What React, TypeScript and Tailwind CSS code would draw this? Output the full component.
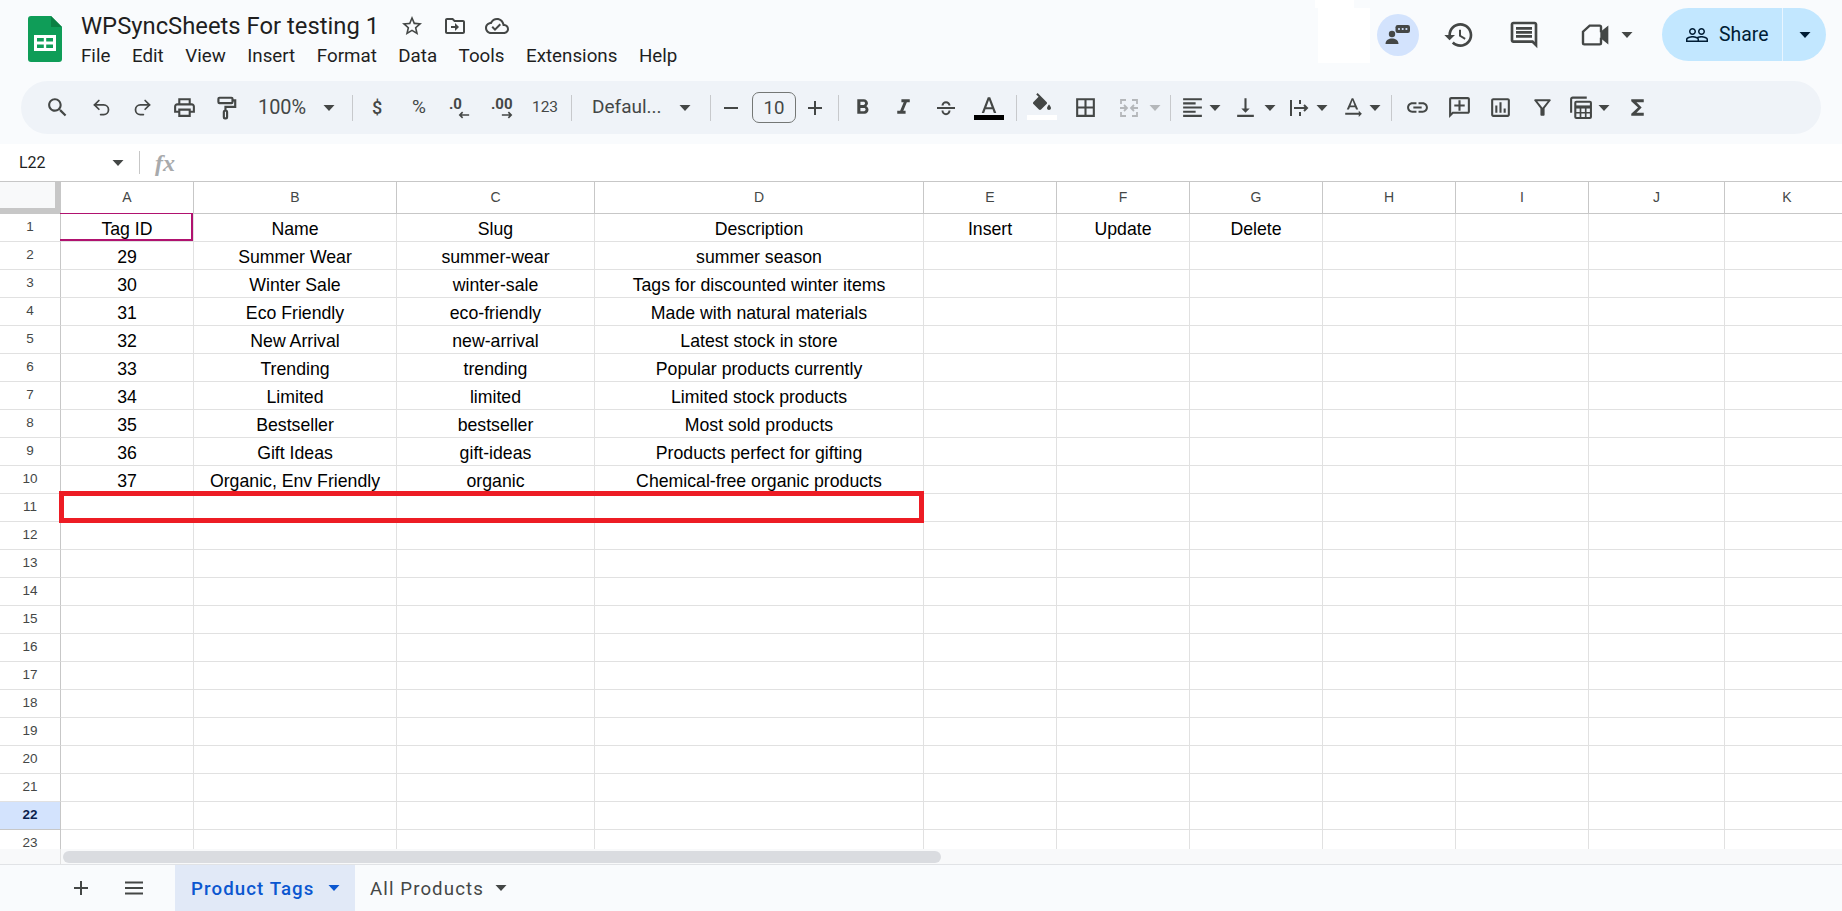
import React from "react";
import { Undo2, Redo2 } from "lucide-react";

const P: Record<string, string> = {
  search: "M15.5 14h-.79l-.28-.27C15.41 12.59 16 11.11 16 9.5 16 5.91 13.09 3 9.5 3S3 5.91 3 9.5 5.91 16 9.5 16c1.61 0 3.09-.59 4.23-1.57l.27.28v.79l5 4.99L20.49 19l-4.99-5zm-6 0C7.01 14 5 11.99 5 9.5S7.01 5 9.5 5 14 7.01 14 9.5 11.99 14 9.5 14z",
  print: "M19 8h-1V3H6v5H5c-1.66 0-3 1.34-3 3v6h4v4h12v-4h4v-6c0-1.66-1.34-3-3-3zM8 5h8v3H8V5zm8 12v2H8v-4h8v2zm2-2v-2H6v2H4v-4c0-.55.45-1 1-1h14c.55 0 1 .45 1 1v4h-2z",
  bold: "M15.6 10.79c.97-.67 1.65-1.77 1.65-2.79 0-2.26-1.75-4-4-4H7v14h7.04c2.09 0 3.71-1.7 3.71-3.79 0-1.52-.86-2.82-2.15-3.42zM10 6.5h3c.83 0 1.5.67 1.5 1.5s-.67 1.5-1.5 1.5h-3v-3zm3.5 9H10v-3h3.5c.83 0 1.5.67 1.5 1.5s-.67 1.5-1.5 1.5z",
  italic: "M10 4v3h2.21l-3.42 8H6v3h8v-3h-2.21l3.42-8H18V4z",
  borders: "M3 3v18h18V3H3zm8 16H5v-6h6v6zm0-8H5V5h6v6zm8 8h-6v-6h6v6zm0-8h-6V5h6v6z",
  align: "M15 15H3v2h12v-2zm0-8H3v2h12V7zM3 13h18v-2H3v2zm0 8h18v-2H3v2zM3 3v2h18V3H3z",
  valign: "M16 13h-3V3h-2v10H8l4 4 4-4zM4 19v2h16v-2H4z",
  rot: "M21 18l-3-3v2H5v2h13v2l3-3zM9.5 11.8h5l.9 2.2h2.1L12.75 3h-1.5L6.5 14h2.1l.9-2.2zM12 5l1.87 5h-3.74L12 5z",
  link: "M3.9 12c0-1.71 1.39-3.1 3.1-3.1h4V7H7c-2.76 0-5 2.24-5 5s2.24 5 5 5h4v-1.9H7c-1.71 0-3.1-1.39-3.1-3.1zM8 13h8v-2H8v2zm9-6h-4v1.9h4c1.71 0 3.1 1.39 3.1 3.1s-1.39 3.1-3.1 3.1h-4V17h4c2.76 0 5-2.24 5-5s-2.24-5-5-5z",
  addc: "M2 4v18l4-4h14c1.1 0 2-.9 2-2V4c0-1.1-.9-2-2-2H4c-1.1 0-2 .9-2 2zm2 13.17V4h16v12H5.17L4 17.17zM13 5h-2v4H7v2h4v4h2v-4h4V9h-4z",
  chart: "M9 17H7v-7h2v7zm4 0h-2V7h2v10zm4 0h-2v-4h2v4zm2 2H5V5h14v14zm0-16H5c-1.1 0-2 .9-2 2v14c0 1.1.9 2 2 2h14c1.1 0 2-.9 2-2V5c0-1.1-.9-2-2-2z",
  filter: "M7 6h10l-5.01 6.3L7 6zm-2.75-.39C6.27 8.2 10 13 10 13v6c0 .55.45 1 1 1h2c.55 0 1-.45 1-1v-6s3.72-4.8 5.74-7.39c.51-.66.04-1.61-.79-1.61H5.04c-.83 0-1.3.95-.79 1.61z",
  sigma: "M18 4H6v2l6.5 6L6 18v2h12v-3h-7l5-5-5-5h7z",
  history: "M13 3c-4.97 0-9 4.03-9 9H1l3.89 3.89.07.14L9 12H6c0-3.87 3.13-7 7-7s7 3.13 7 7-3.13 7-7 7c-1.93 0-3.68-.79-4.94-2.06l-1.42 1.42C8.27 19.99 10.51 21 13 21c4.97 0 9-4.03 9-9s-4.03-9-9-9zm-1 5v5l4.28 2.54.72-1.21-3.5-2.08V8H12z",
  comment: "M21.99 4c0-1.1-.89-2-1.99-2H4c-1.1 0-2 .9-2 2v12c0 1.1.9 2 2 2h14l4 4-.01-18zM20 4v13.17L18.83 16H4V4h16zM6 12h12v2H6zm0-3h12v2H6zm0-3h12v2H6z",
  people: "M16.5 13c-1.2 0-3.07.34-4.5 1-1.43-.67-3.3-1-4.5-1C5.33 13 1 14.08 1 16.25V19h22v-2.75c0-2.17-4.33-3.25-6.5-3.25zm-4 4.5h-10v-1.25c0-.54 2.56-1.75 5-1.75s5 1.21 5 1.75v1.25zm9 0H14v-1.25c0-.46-.2-.86-.52-1.22.88-.3 1.96-.53 3.02-.53 2.44 0 5 1.21 5 1.75v1.25zM7.5 12c1.93 0 3.5-1.57 3.5-3.5S9.43 5 7.5 5 4 6.57 4 8.5 5.57 12 7.5 12zm0-5.5c1.1 0 2 .9 2 2s-.9 2-2 2-2-.9-2-2 .9-2 2-2zm9 5.5c1.93 0 3.5-1.57 3.5-3.5S18.43 5 16.5 5 13 6.57 13 8.5s1.57 3.5 3.5 3.5zm0-5.5c1.1 0 2 .9 2 2s-.9 2-2 2-2-.9-2-2 .9-2 2-2z",
  star: "M22 9.24l-7.19-.62L12 2 9.19 8.63 2 9.24l5.46 4.73L5.82 21 12 17.27 18.18 21l-1.63-7.03L22 9.24zM12 15.4l-3.76 2.27 1-4.28-3.32-2.88 4.38-.38L12 6.1l1.71 4.04 4.38.38-3.32 2.88 1 4.28L12 15.4z",
  folder: "M20 6h-8l-2-2H4c-1.1 0-1.99.9-1.99 2L2 18c0 1.1.9 2 2 2h16c1.1 0 2-.9 2-2V8c0-1.1-.9-2-2-2zm0 12H4V6h5.17l2 2H20v10zm-8-4H8v-2h4V9l4 4-4 4v-3z",
  cloud: "M19.35 10.04C18.67 6.59 15.64 4 12 4 9.11 4 6.6 5.64 5.35 8.04 2.34 8.36 0 10.91 0 14c0 3.31 2.69 6 6 6h13c2.76 0 5-2.24 5-5 0-2.64-2.05-4.78-4.65-4.96zM19 18H6c-2.21 0-4-1.79-4-4 0-2.05 1.53-3.76 3.56-3.97l1.07-.11.5-.95C8.08 7.14 9.94 6 12 6c2.62 0 4.88 1.86 5.39 4.43l.3 1.5 1.53.11c1.56.1 2.78 1.41 2.78 2.96 0 1.65-1.35 3-3 3zm-9-3.82l-2.09-2.09L6.5 13.5 10 17l6.01-6.01-1.41-1.41z",
};

const roboto = "font-['Roboto','Liberation_Sans',sans-serif]";
const arial = "font-['Liberation_Sans',Arial,sans-serif]";

function Ico({ d, size = 25, color = "#444746" }: { d: string; size?: number; color?: string }) {
  return (
    <svg width={size} height={size} viewBox="0 0 24 24" fill={color} className="shrink-0">
      <path d={d} />
    </svg>
  );
}

function Stroke({ children, size = 25, color = "#444746", w = 2 }: { children: React.ReactNode; size?: number; color?: string; w?: number }) {
  return (
    <svg width={size} height={size} viewBox="0 0 24 24" fill="none" stroke={color} strokeWidth={w} className="shrink-0">
      {children}
    </svg>
  );
}

function Tool({ c, children }: { c: string; children: React.ReactNode }) {
  return <div className={"flex h-[24px] w-[24px] shrink-0 items-center justify-center " + c}>{children}</div>;
}

function Caret({ c = "", color = "#444746" }: { c?: string; color?: string }) {
  return (
    <svg width="12" height="6" viewBox="0 0 12 6" className={"shrink-0 " + c}>
      <path d="M0.5 0h11L6 6z" fill={color} />
    </svg>
  );
}

function Sep({ c }: { c: string }) {
  return <div className={"h-[26px] w-px shrink-0 bg-[#c7c9cc] " + c} />;
}

function Toolbar() {
  return (
    <div className={"mx-[21px] flex h-[53px] items-center rounded-full bg-[#eff3f8] pl-[24px] text-[#444746] " + roboto}>
      <Tool c=""><Ico d={P.search} /></Tool>
      <Tool c="ml-[20px]"><Undo2 size={21} strokeWidth={2} color="#444746" /></Tool>
      <Tool c="ml-[17px]"><Redo2 size={21} strokeWidth={2} color="#444746" /></Tool>
      <Tool c="ml-[18px]"><Ico d={P.print} /></Tool>
      <Tool c="ml-[18px]">
        <Stroke size={26}>
          <rect x="5" y="2.500" width="13" height="5" rx="1" />
          <path d="M18 5h2.500v6H11.500v3" />
          <rect x="10" y="14.500" width="3" height="7" rx="1" />
        </Stroke>
      </Tool>
      <div className="ml-[20px] mt-[1px] w-[49px] shrink-0 whitespace-nowrap text-[19.9px]">100%</div>
      <Caret c="ml-[16px]" />
      <Sep c="ml-[17px]" />
      <Tool c="ml-[12px]"><span className="text-[18px] font-medium">$</span></Tool>
      <Tool c="ml-[18px]"><span className="text-[19px]">%</span></Tool>
      <Tool c="ml-[17px]">
        <div className="flex w-[22px] flex-col">
          <span className="self-start text-[15px] font-bold leading-[14px]">.0</span>
          <svg width="13" height="8" viewBox="0 0 14 8" fill="none" stroke="#444746" strokeWidth="1.8" className="self-end"><path d="M12 4H2M5 1L2 4l3 3" /></svg>
        </div>
      </Tool>
      <Tool c="ml-[18px]">
        <div className="flex w-[22px] flex-col">
          <span className="self-start text-[15px] font-bold leading-[14px]">.00</span>
          <svg width="13" height="8" viewBox="0 0 14 8" fill="none" stroke="#444746" strokeWidth="1.8" className="self-end"><path d="M2 4h10M9 1l3 3-3 3" /></svg>
        </div>
      </Tool>
      <Tool c="ml-[19px]"><span className="text-[15.5px]">123</span></Tool>
      <Sep c="ml-[14px]" />
      <div className="ml-[20px] w-[70px] shrink-0 whitespace-nowrap text-[19px]">Defaul...</div>
      <Caret c="ml-[17px]" />
      <Sep c="ml-[19px]" />
      <Tool c="ml-[8px]"><div className="h-[2px] w-[14px] bg-[#444746]" /></Tool>
      <div className="ml-[9px] flex h-[31px] w-[44px] shrink-0 items-center justify-center rounded-[7px] border border-[#747775] text-[18.67px]">10</div>
      <Tool c="ml-[7px]">
        <Stroke size={24}><path d="M12 5v14M5 12h14" /></Stroke>
      </Tool>
      <Sep c="ml-[11px]" />
      <Tool c="ml-[11px]"><Ico d={P.bold} /></Tool>
      <Tool c="ml-[17px]"><Ico d={P.italic} /></Tool>
      <Tool c="ml-[19px]">
        <Stroke size={24}>
          <path d="M3 12h18" />
          <path d="M8.500 9.500a3.500 3.300 0 0 1 7 0" />
          <path d="M8.500 14.500a3.500 3.800 0 0 0 7 0" />
        </Stroke>
      </Tool>
      <div className="ml-[16px] flex h-[24px] w-[30px] shrink-0 flex-col items-center">
        <svg width="22" height="17" viewBox="4 2 16 14" fill="#444746">
          <path d="M11 3 6 16h2l1.100-3h5.800l1.100 3h2L13 3h-2zm-1.200 8.200L12 5.300l2.200 5.900H9.800z" />
        </svg>
        <div className="mt-[2px] h-[5px] w-[30px] shrink-0 bg-black" />
      </div>
      <Sep c="ml-[12px]" />
      <div className="ml-[10px] mt-[-3px] flex h-[27px] w-[30px] shrink-0 flex-col items-center">
        <svg width="24" height="20" viewBox="0 0 24 20" fill="#444746" className="shrink-0">
          <path d="M16.56 8.94L7.62 0 6.21 1.41l2.38 2.38-5.15 5.15c-.59.59-.59 1.54 0 2.12l5.5 5.5c.29.29.68.44 1.06.44s.77-.15 1.06-.44l5.500-5.500c.59-.58.59-1.53 0-2.12zM19 11.5s-2 2.17-2 3.5c0 1.1.9 2 2 2s2-.9 2-2c0-1.33-2-3.5-2-3.5z" />
        </svg>
        <div className="mt-[2px] h-[5px] w-[30px] shrink-0 bg-white" />
      </div>
      <Tool c="ml-[16px]"><Ico d={P.borders} /></Tool>
      <Tool c="ml-[20px]">
        <Stroke color="#b4b7ba" size={24} w={1.8}>
          <path d="M9 4H4v4M4 16v4h5M15 4h5v4M20 16v4h-5" />
          <path d="M3 12h7M7 9l3 3-3 3M21 12h-7M17 9l-3 3 3 3" />
        </Stroke>
      </Tool>
      <Caret c="ml-[8px]" color="#b4b7ba" />
      <Sep c="ml-[9px]" />
      <Tool c="ml-[9px]"><Ico d={P.align} /></Tool>
      <Caret c="ml-[5px]" />
      <Tool c="ml-[12px]"><Ico d={P.valign} /></Tool>
      <Caret c="ml-[7px]" />
      <Tool c="ml-[11px]">
        <Stroke size={24}>
          <path d="M4 4v16M13 4v4M13 16v4M7 12h13M17 9l3 3-3 3" />
        </Stroke>
      </Tool>
      <Caret c="ml-[5px]" />
      <Tool c="ml-[12px]"><Ico d={P.rot} /></Tool>
      <Caret c="ml-[5px]" />
      <Sep c="ml-[10px]" />
      <Tool c="ml-[13px]"><Ico d={P.link} /></Tool>
      <Tool c="ml-[18px]"><Ico d={P.addc} /></Tool>
      <Tool c="ml-[17px]"><Ico d={P.chart} /></Tool>
      <Tool c="ml-[18px]"><Ico d={P.filter} /></Tool>
      <Tool c="ml-[14px]">
        <Stroke size={25}>
          <path d="M3 17V4a1.500 1.500 0 0 1 1.500-1.500H18" />
          <rect x="7" y="6.500" width="15" height="15.500" rx="1" />
          <path d="M7 11.500h15" strokeWidth="3" />
          <path d="M7 17h15M12 12v10M17 12v10" strokeWidth="1.6" />
        </Stroke>
      </Tool>
      <Caret c="ml-[6px]" />
      <Tool c="ml-[15px]"><Ico d={P.sigma} /></Tool>
    </div>
  );
}

function Header() {
  const menu = ["File", "Edit", "View", "Insert", "Format", "Data", "Tools", "Extensions", "Help"];
  return (
    <div className={"flex h-[81px] shrink-0 text-[#1f1f1f] " + roboto}>
      <svg width="34" height="46" viewBox="0 0 34 46" className="ml-[28px] mt-[16px] shrink-0">
        <path d="M3 0h20l11 11v32a3 3 0 0 1-3 3H3a3 3 0 0 1-3-3V3a3 3 0 0 1 3-3z" fill="#0f9d58" />
        <path d="M23 0l11 11H23z" fill="#0b8043" />
        <path d="M6 19h22v16H6z" fill="#fff" />
        <path d="M9 22h6.800v3.600H9zM18.200 22H25v3.600h-6.800zM9 28.400h6.800V32H9zM18.200 28.400H25V32h-6.800z" fill="#0f9d58" />
      </svg>
      <div className="ml-[19px] flex flex-col">
        <div className="mt-[10px] flex h-[32px] items-center">
          <div className="w-[319px] whitespace-nowrap text-[23.8px] leading-[32px]">WPSyncSheets For testing 1</div>
          <Ico d={P.star} size={24} />
          <div className="ml-[19px]"><Ico d={P.folder} size={24} /></div>
          <div className="ml-[18px]"><Ico d={P.cloud} size={24} /></div>
        </div>
        <div className="mt-[2px] flex gap-[21.5px] whitespace-nowrap text-[18.75px] leading-[24px]">
          {menu.map((m) => <span key={m}>{m}</span>)}
        </div>
      </div>
      <div className="ml-auto mr-[16px] mt-[8px] flex h-[53px] items-center">
        <div className="relative h-[55px] w-[52px] shrink-0 self-start bg-white">
          <div className="absolute -left-[3px] -top-[8px] h-[8px] w-[39px] bg-white" />
        </div>
        <div className="ml-[7px] flex h-[42px] w-[42px] shrink-0 items-center justify-center rounded-full bg-[#d3e3fd]">
          <svg width="28" height="28" viewBox="0 0 28 28" fill="#444746">
            <circle cx="8" cy="13" r="3.2" />
            <path d="M1.500 23c0-3.600 3.400-5.400 6.500-5.400s6.500 1.800 6.500 5.400z" />
            <rect x="11.5" y="4" width="14.5" height="8" rx="2.2" />
            <circle cx="15" cy="8" r="1.1" fill="#d3e3fd" />
            <circle cx="18.7" cy="8" r="1.1" fill="#d3e3fd" />
            <circle cx="22.4" cy="8" r="1.1" fill="#d3e3fd" />
          </svg>
        </div>
        <div className="ml-[24px]"><Ico d={P.history} size={32} /></div>
        <div className="ml-[33px]"><Ico d={P.comment} size={32} /></div>
        <div className="ml-[39px]">
          <Stroke size={32}>
            <path d="M16.500 10V6a1 1 0 0 0-1-1H8L3 9.500V18a1 1 0 0 0 1 1h11.500a1 1 0 0 0 1-1v-4" strokeWidth="1.8" />
            <path d="M16.500 10l5-4v12l-5-4z" fill="#444746" strokeWidth="1" />
          </Stroke>
        </div>
        <Caret c="ml-[10px]" />
        <div className="ml-[29px] flex h-[53px] w-[164px] shrink-0 items-center rounded-full bg-[#c2e7ff] text-[#001d35]">
          <div className="ml-[23px]"><Ico d={P.people} size={24} color="#001d35" /></div>
          <span className="ml-[10px] w-[63px] whitespace-nowrap text-[19.4px] font-normal">Share</span>
          <div className="h-[53px] w-px shrink-0 bg-[#e8f5ff]" />
          <Caret c="ml-[16px]" color="#001d35" />
        </div>
      </div>
    </div>
  );
}

function FormulaBar() {
  return (
    <div className={"flex h-[38px] shrink-0 items-center border-b border-[#c7c7c7] bg-white text-[#1f1f1f]"}>
      <span className={"ml-[19px] w-[93px] text-[16px] " + roboto}>L22</span>
      <Caret c="" />
      <div className="ml-[15px] h-[23px] w-px bg-[#c7c7c7]" />
      <span className="ml-[15px] font-['Liberation_Serif',serif] text-[24px] font-bold italic text-[#a8aaac]">fx</span>
    </div>
  );
}

const colW = [
  "w-[133px]", "w-[203px]", "w-[198px]", "w-[329px]", "w-[133px]", "w-[133px]", "w-[133px]", "w-[133px]", "w-[133px]", "w-[136px]", "w-[125px]",
];
const letters = ["A", "B", "C", "D", "E", "F", "G", "H", "I", "J", "K"];
const data: string[][] = [
  ["Tag ID", "Name", "Slug", "Description", "Insert", "Update", "Delete"],
  ["29", "Summer Wear", "summer-wear", "summer season"],
  ["30", "Winter Sale", "winter-sale", "Tags for discounted winter items"],
  ["31", "Eco Friendly", "eco-friendly", "Made with natural materials"],
  ["32", "New Arrival", "new-arrival", "Latest stock in store"],
  ["33", "Trending", "trending", "Popular products currently"],
  ["34", "Limited", "limited", "Limited stock products"],
  ["35", "Bestseller", "bestseller", "Most sold products"],
  ["36", "Gift Ideas", "gift-ideas", "Products perfect for gifting"],
  ["37", "Organic, Env Friendly", "organic", "Chemical-free organic products"],
];

function Grid() {
  const rows = Array.from({ length: 23 }, (_, i) => i);
  return (
    <div className={"h-[667px] shrink-0 overflow-hidden bg-white " + arial}>
      <div className="flex h-[32px]">
        <div className="h-[32px] w-[61px] shrink-0 border-b-[6px] border-r-[6px] border-[#c7c7c7] bg-[#f8f9fa]" />
        {letters.map((l, i) => (
          <div key={l} className={"flex h-[32px] shrink-0 items-center justify-center border-b border-r border-[#c7c7c7] text-[14px] text-[#444746] " + colW[i]}>
            {l}
          </div>
        ))}
      </div>
      {rows.map((r) => {
        const active = r === 21;
        return (
          <div key={r} className="relative flex h-[28px]">
            <div
              className={
                active
                  ? "flex h-[28px] w-[61px] shrink-0 items-center justify-center border-b border-r border-[#c7c7c7] bg-[#d3e3fd] text-[13.5px] font-bold text-[#0b1f4d]"
                  : "flex h-[28px] w-[61px] shrink-0 items-center justify-center border-b border-r border-[#e1e1e1] text-[13.5px] text-[#444746] [border-right-color:#c7c7c7]"
              }
            >
              {r + 1}
            </div>
            {colW.map((w, c) => (
              <div
                key={c}
                className={"relative flex h-[28px] shrink-0 items-center justify-center whitespace-nowrap border-b border-r border-[#e1e1e1] pt-[4px] text-[17.7px] text-black " + w}
              >
                {data[r]?.[c] ?? ""}
                {r === 0 && c === 0 && (
                  <div className="absolute -left-px -top-px h-[28px] w-[133px] border-b-2 border-r-2 border-t border-[#b0126f]" />
                )}
              </div>
            ))}
            {r === 10 && (
              <div className="absolute -top-[3px] left-[59px] z-10 h-[32px] w-[865px] border-[5px] border-[#ed1c24]" />
            )}
          </div>
        );
      })}
    </div>
  );
}

function Footer() {
  return (
    <>
      <div className="flex h-[15px] shrink-0 items-center bg-[#f8f9fa]">
        <div className="h-[15px] w-[61px] shrink-0 border-r border-[#e1e1e1]" />
        <div className="ml-[2px] h-[12px] w-[878px] rounded-full bg-[#dadce0]" />
      </div>
      <div className={"flex h-[47px] shrink-0 items-center border-t border-[#e1e3e6] bg-[#f9fbfd] " + roboto}>
        <div className="ml-[69px]">
          <Stroke size={24}><path d="M12 5v14M5 12h14" /></Stroke>
        </div>
        <div className="ml-[29px]">
          <Stroke size={24}><path d="M3 6.500h18M3 12h18M3 17.500h18" /></Stroke>
        </div>
        <div className="ml-[29px] flex h-[46px] w-[180px] shrink-0 items-center bg-[#e1e9f7] text-[#0b57d0]">
          <span className="ml-[16px] mt-[2px] w-[123px] whitespace-nowrap text-[18.67px] font-medium tracking-[1.1px]">Product Tags</span>
          <Caret c="ml-[14px]" color="#0b57d0" />
        </div>
        <div className="flex h-[46px] items-center text-[#444746]">
          <span className="ml-[15px] mt-[2px] w-[111px] whitespace-nowrap text-[18.67px] font-normal tracking-[1.1px]">All Products</span>
          <Caret c="ml-[14px]" />
        </div>
      </div>
    </>
  );
}

export default function App() {
  return (
    <div className="flex h-[911px] w-[1842px] flex-col overflow-hidden bg-[#f9fbfd]">
      <Header />
      <Toolbar />
      <div className="h-[10px] shrink-0" />
      <FormulaBar />
      <Grid />
      <Footer />
    </div>
  );
}
